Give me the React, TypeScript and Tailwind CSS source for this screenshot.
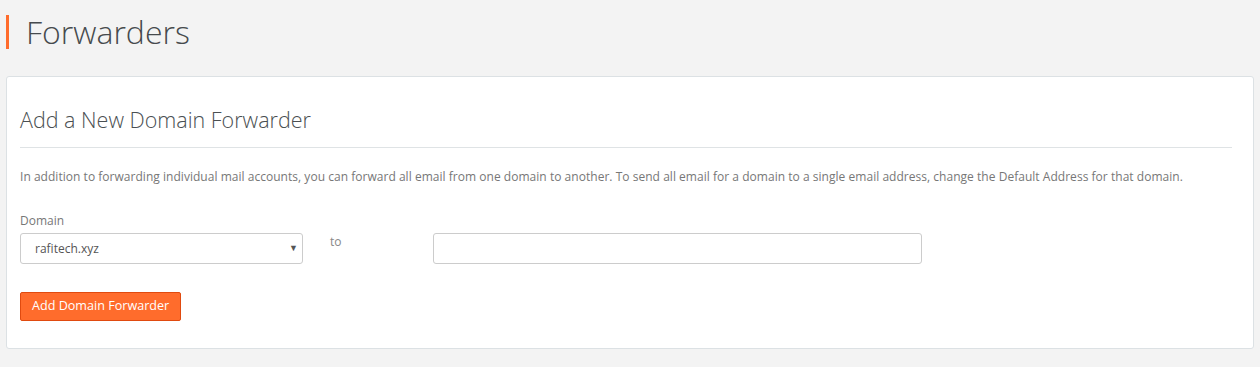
import { useState } from 'react'

export default function App() {
  const [domain, setDomain] = useState('rafitech.xyz')
  const [target, setTarget] = useState('')

  return (
    <div className="min-h-[367px] bg-[#f3f3f3] px-[6px] pt-[15px] pb-[18px] text-[#555] font-['Open_Sans',sans-serif]">
      {/* page title */}
      <div className="flex items-center h-[34px]">
        <span className="w-[3px] h-[34px] bg-[#ff6c2c]" />
        <h1 className="ml-[17px] text-[32px] font-light leading-none text-[#464a4d]">Forwarders</h1>
      </div>

      <div className="mt-[27px] bg-white border border-[#dce1e4] rounded-[3px] pl-[13px] pr-[14px] pt-[28px] pb-[27px]">
        <h2 className="text-[21.5px] font-light leading-[30px] text-[#4a4f52]">Add a New Domain Forwarder</h2>
        <div className="mt-[12px] mr-[7px] border-t border-[#dfe3e5]" />

        <p className="mt-[20px] text-[12px] leading-[17px] tracking-[0.03px] text-[#777]">
          In addition to forwarding individual mail accounts, you can forward all email from one domain to another. To send all email for a domain to a single email address, change the Default Address for that domain.
        </p>

        <label className="block mt-[27px] text-[12px] leading-[17px] text-[#777]">Domain</label>
        <div className="flex items-start mt-[4px]">
          <div className="relative w-[283px]">
            <select
              value={domain}
              onChange={(e) => setDomain(e.target.value)}
              className="appearance-none w-full h-[31px] rounded-[3px] border border-[#ccc] bg-white pl-[14px] text-[12px] text-[#555] outline-none"
            >
              <option>rafitech.xyz</option>
            </select>
            <span className="pointer-events-none absolute right-[5px] top-[8px] text-[9px] text-[#555]">▼</span>
          </div>
          <span className="ml-[27px] w-[103px] text-[12px] leading-[17px] text-[#888]">to</span>
          <input
            value={target}
            onChange={(e) => setTarget(e.target.value)}
            className="w-[489px] h-[31px] rounded-[3px] border border-[#ccc] bg-white px-[10px] text-[12px] outline-none"
          />
        </div>

        <button className="mt-[28px] h-[29px] px-[11px] rounded-[2px] border border-[#e04a0f] bg-[#ff6c2c] text-[12.6px] text-white">
          Add Domain Forwarder
        </button>
      </div>
    </div>
  )
}
